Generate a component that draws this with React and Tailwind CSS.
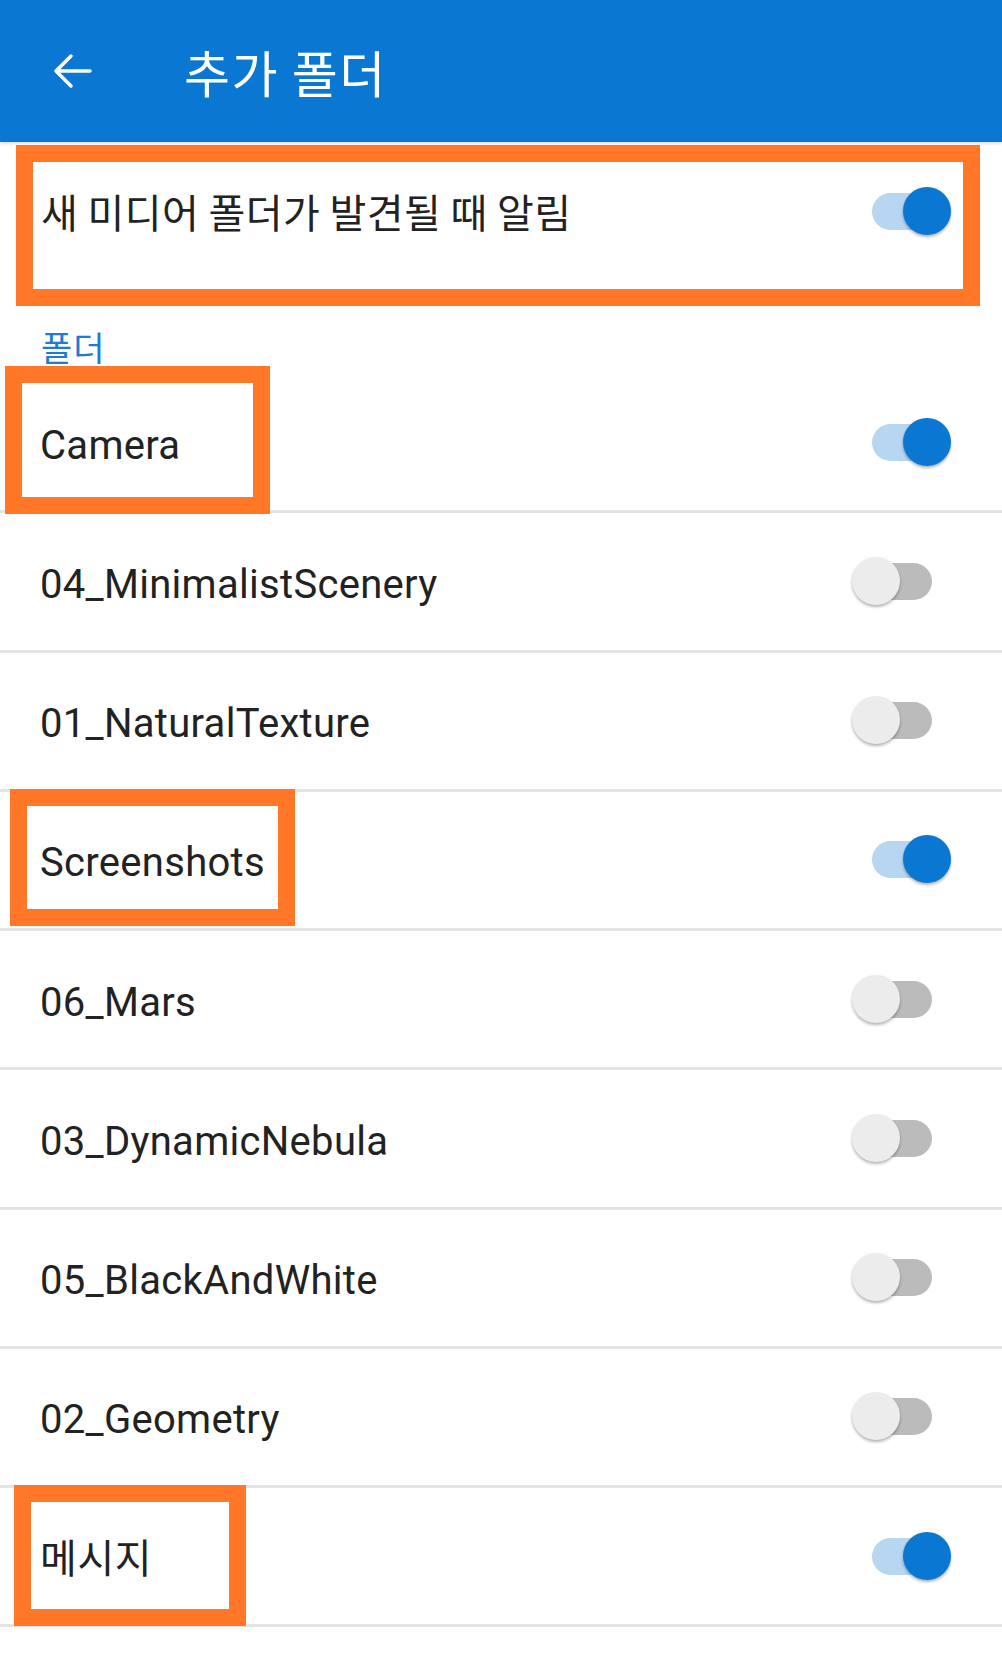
const FOLDERS = [
  { name: 'Camera', on: true },
  { name: '04_MinimalistScenery', on: false },
  { name: '01_NaturalTexture', on: false },
  { name: 'Screenshots', on: true },
  { name: '06_Mars', on: false },
  { name: '03_DynamicNebula', on: false },
  { name: '05_BlackAndWhite', on: false },
  { name: '02_Geometry', on: false },
  { name: '메시지', on: true, kr: true },
];

const KR = { fontFamily: '"Noto Sans CJK KR", "Noto Sans", sans-serif' };
const LATIN = { fontFamily: 'Roboto, "Noto Sans CJK KR", sans-serif' };

function Toggle({ on }) {
  return (
    <div className="relative w-[102px] h-[51px] shrink-0 mr-[49px]">
      {on ? (
        <>
          <div className="absolute left-[21px] top-[7px] w-[76px] h-[37px] rounded-full bg-[#b6d6f2]" />
          <div className="absolute left-[52px] top-[1px] w-[48px] h-[48px] rounded-full bg-[#0a77d2] shadow-[0_2px_3px_rgba(0,0,0,0.3)]" />
        </>
      ) : (
        <>
          <div className="absolute left-[5px] top-[7px] w-[76px] h-[37px] rounded-full bg-[#bbbbbb]" />
          <div className="absolute left-[1px] top-[1px] w-[48px] h-[48px] rounded-full bg-[#ececec] shadow-[0_2px_3px_rgba(0,0,0,0.3)]" />
        </>
      )}
    </div>
  );
}

/* orange annotation frames drawn over the screenshot */
function Mark({ className }) {
  return <div className={`absolute border-[17px] border-[#ff7727] pointer-events-none ${className}`} />;
}

export default function App() {
  return (
    <div className="relative w-[1002px] min-h-[1656px] bg-white overflow-hidden">
      {/* Header */}
      <div className="h-[142px] bg-[#0a78d3] flex items-center pl-[53px] shadow-[0_2px_3px_rgba(0,0,0,0.12)]">
        <svg viewBox="0 0 39 36" className="w-[39px] h-[36px]" fill="none" stroke="white" strokeWidth="3.5" strokeLinecap="round" strokeLinejoin="round">
          <path d="M37 18H3M18 3L3 18l15 15" />
        </svg>
        <h1 className="ml-[92px] text-white text-[50px] leading-none tracking-[1.5px]" style={KR}>추가 폴더</h1>
      </div>

      {/* Notify row */}
      <div className="h-[138px] flex items-center justify-between pl-[41px]">
        <span className="text-[40px] leading-none tracking-[0.4px] text-[#222]" style={KR}>새 미디어 폴더가 발견될 때 알림</span>
        <Toggle on />
      </div>

      {/* Section label */}
      <div className="h-[94px] pt-[50px] pl-[41px]">
        <span className="text-[34px] leading-none tracking-[1px] text-[#1d7bd3]" style={KR}>폴더</span>
      </div>

      {/* Folder list */}
      {FOLDERS.map((f) => (
        <div key={f.name} className="h-[139.25px] box-border border-b-[3px] border-[#e3e3e3] flex items-center justify-between pl-[40px]">
          <span
            className={f.kr ? 'text-[40px] leading-none tracking-[0.6px] text-[#222]' : 'pt-[7px] text-[40px] leading-none tracking-[0.3px] text-[#222]'}
            style={f.kr ? KR : LATIN}
          >
            {f.name}
          </span>
          <Toggle on={f.on} />
        </div>
      ))}

      <Mark className="left-[16px] top-[145px] w-[964px] h-[161px]" />
      <Mark className="left-[5px] top-[366px] w-[265px] h-[148px]" />
      <Mark className="left-[10px] top-[789px] w-[285px] h-[137px]" />
      <Mark className="left-[14px] top-[1485px] w-[232px] h-[141px]" />
    </div>
  );
}
